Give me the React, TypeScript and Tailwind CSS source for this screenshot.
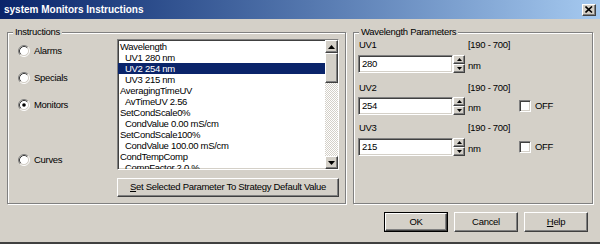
import React from 'react';

const ui = "font-['Liberation_Sans',Arial,sans-serif] text-[9.5px] tracking-[-0.3px] text-black";
const raised = 'border border-t-white border-l-white border-r-[#404040] border-b-[#404040] shadow-[inset_-1px_-1px_0_#808080]';
const sunken = 'border border-t-[#808080] border-l-[#808080] border-r-white border-b-white shadow-[inset_1px_1px_0_#404040,inset_-1px_-1px_0_#d4d0c8]';
const group = 'border border-[#808080] shadow-[inset_1px_1px_0_#fff,1px_1px_0_#fff] m-0 p-0 min-w-0';

const items = [
  { text: 'Wavelength', sub: false },
  { text: 'UV1 280 nm', sub: true },
  { text: 'UV2 254 nm', sub: true, selected: true },
  { text: 'UV3 215 nm', sub: true },
  { text: 'AveragingTimeUV', sub: false },
  { text: 'AvTimeUV 2.56', sub: true },
  { text: 'SetCondScale0%', sub: false },
  { text: 'CondValue 0.00 mS/cm', sub: true },
  { text: 'SetCondScale100%', sub: false },
  { text: 'CondValue 100.00 mS/cm', sub: true },
  { text: 'CondTempComp', sub: false },
  { text: 'CompFactor 2.0 %', sub: true },
];

const wavelengths = [
  { name: 'UV1', value: '280', off: false, labelTop: 'mt-[1px]', inputTop: 'mt-[4px]' },
  { name: 'UV2', value: '254', off: true, labelTop: 'mt-[9px]', inputTop: 'mt-[3px]' },
  { name: 'UV3', value: '215', off: true, labelTop: 'mt-[7px]', inputTop: 'mt-[4px]' },
];

const Arrow: React.FC<{ up?: boolean; w?: number; h?: number }> = ({ up, w = 7, h = 4 }) => (
  <svg width={w} height={h} viewBox={`0 0 ${w} ${h}`}>
    <polygon points={up ? `0,${h} ${w / 2},0 ${w},${h}` : `0,0 ${w},0 ${w / 2},${h}`} fill="#000" />
  </svg>
);

const Radio: React.FC<{ label: string; checked?: boolean; className?: string }> = ({ label, checked, className }) => (
  <div className={`flex items-center gap-[4px] h-[12px] ${className ?? ''}`}>
    <svg width="12" height="12" viewBox="0 0 12 12">
      <circle cx="6" cy="6" r="4.5" fill="#fff" />
      <path d="M2.11 9.89 A5.5 5.5 0 0 1 9.89 2.11" stroke="#808080" fill="none" />
      <path d="M9.89 2.11 A5.5 5.5 0 0 1 2.11 9.89" stroke="#fff" fill="none" />
      <path d="M2.82 9.18 A4.5 4.5 0 0 1 9.18 2.82" stroke="#404040" fill="none" />
      <path d="M9.18 2.82 A4.5 4.5 0 0 1 2.82 9.18" stroke="#d4d0c8" fill="none" />
      {checked && <circle cx="6" cy="6" r="1.8" fill="#000" />}
    </svg>
    <span>{label}</span>
  </div>
);

const Checkbox: React.FC = () => <span className={`w-[12px] h-[12px] bg-white ${sunken}`} />;

const Spinner: React.FC = () => (
  <div className="flex flex-col w-[12px] h-[18px]">
    <div className={`h-[9px] bg-[#d4d0c8] flex items-center justify-center ${raised}`}>
      <Arrow up w={5} h={3} />
    </div>
    <div className={`h-[9px] bg-[#d4d0c8] flex items-center justify-center ${raised}`}>
      <Arrow w={5} h={3} />
    </div>
  </div>
);

const App: React.FC = () => {
  return (
    <div className={`w-[600px] h-[244px] bg-[#d4d0c8] flex flex-col border-b-2 border-b-[#404040] ${ui}`}>
      {/* title bar */}
      <div className="h-[19px] flex items-center justify-between bg-linear-to-r from-[#0a246a] to-[#a6caf0] pl-[4px] pr-[4px]">
        <span className="text-white font-bold text-[10px] tracking-normal">system Monitors Instructions</span>
        <div className={`w-[14px] h-[12px] bg-[#d4d0c8] flex items-center justify-center ${raised}`}>
          <svg width="8" height="7" viewBox="0 0 8 7">
            <path d="M0.5 0.5 L7 6.5 M7 0.5 L0.5 6.5" stroke="#000" strokeWidth="1.6" />
          </svg>
        </div>
      </div>

      <div className="flex gap-[7px] px-[7px] pt-[7px]">
        {/* instructions */}
        <fieldset className={`w-[339px] h-[178px] ${group}`}>
          <legend className="ml-[5px] px-[2px] leading-[12px] bg-[#d4d0c8]">Instructions</legend>
          <div className="flex">
            <div className="w-[109px] pl-[10px] flex flex-col">
              <Radio label="Alarms" className="mt-[7px]" />
              <Radio label="Specials" className="mt-[15px]" />
              <Radio label="Monitors" checked className="mt-[15px]" />
              <Radio label="Curves" className="mt-[43px]" />
            </div>
            <div className="w-[222px] pt-[1px] flex flex-col">
              <div className={`h-[131px] bg-white flex overflow-hidden ${sunken}`}>
                <div className="flex-1 overflow-hidden pt-[1px]">
                  {items.map((it) => (
                    <div
                      key={it.text}
                      className={`h-[11px] leading-[11px] whitespace-nowrap ${it.sub ? 'pl-[7px]' : 'pl-[2px]'} ${
                        it.selected ? 'bg-[#0a246a] text-white' : ''
                      }`}
                    >
                      {it.text}
                    </div>
                  ))}
                </div>
                <div className="w-[13px] flex flex-col bg-[repeating-conic-gradient(#d4d0c8_0_25%,#fff_0_50%)] bg-[length:2px_2px]">
                  <div className={`h-[13px] bg-[#d4d0c8] flex items-center justify-center ${raised}`}>
                    <Arrow up />
                  </div>
                  <div className={`h-[30px] bg-[#d4d0c8] ${raised}`} />
                  <div className="flex-1" />
                  <div className={`h-[13px] bg-[#d4d0c8] flex items-center justify-center ${raised}`}>
                    <Arrow />
                  </div>
                </div>
              </div>
              <button className={`mt-[8px] h-[19px] bg-[#d4d0c8] flex items-center justify-center ${raised}`}>
                <span>
                  <span className="underline">S</span>et Selected Parameter To Strategy Default Value
                </span>
              </button>
            </div>
          </div>
        </fieldset>

        {/* wavelength parameters */}
        <fieldset className={`w-[240px] h-[178px] ${group}`}>
          <legend className="ml-[5px] px-[2px] leading-[12px] bg-[#d4d0c8]">Wavelength Parameters</legend>
          <div className="flex flex-col pl-[4px]">
            {wavelengths.map((w) => (
              <div key={w.name} className="flex flex-col">
                <div className={`flex h-[12px] leading-[12px] ${w.labelTop}`}>
                  <span className="w-[110px] pl-[1px]">{w.name}</span>
                  <span>[190 - 700]</span>
                </div>
                <div className={`flex items-center h-[18px] ${w.inputTop}`}>
                  <div className={`w-[95px] h-[18px] bg-white flex items-center pl-[3px] ${sunken}`}>{w.value}</div>
                  <Spinner />
                  <span className="w-[54px] pl-[3px] self-end leading-[14px]">nm</span>
                  {w.off && (
                    <div className="flex items-center gap-[4px]">
                      <Checkbox />
                      <span>OFF</span>
                    </div>
                  )}
                </div>
              </div>
            ))}
          </div>
        </fieldset>
      </div>

      {/* dialog buttons */}
      <div className="flex justify-end gap-[6px] pr-[12px] mt-[8px]">
        <div className="w-[64px] h-[20px] border border-black">
          <button className={`w-full h-full bg-[#d4d0c8] ${raised}`}>OK</button>
        </div>
        <button className={`w-[64px] h-[20px] bg-[#d4d0c8] ${raised}`}>Cancel</button>
        <button className={`w-[64px] h-[20px] bg-[#d4d0c8] ${raised}`}>
          <span className="underline">H</span>elp
        </button>
      </div>
    </div>
  );
};

export default App;
